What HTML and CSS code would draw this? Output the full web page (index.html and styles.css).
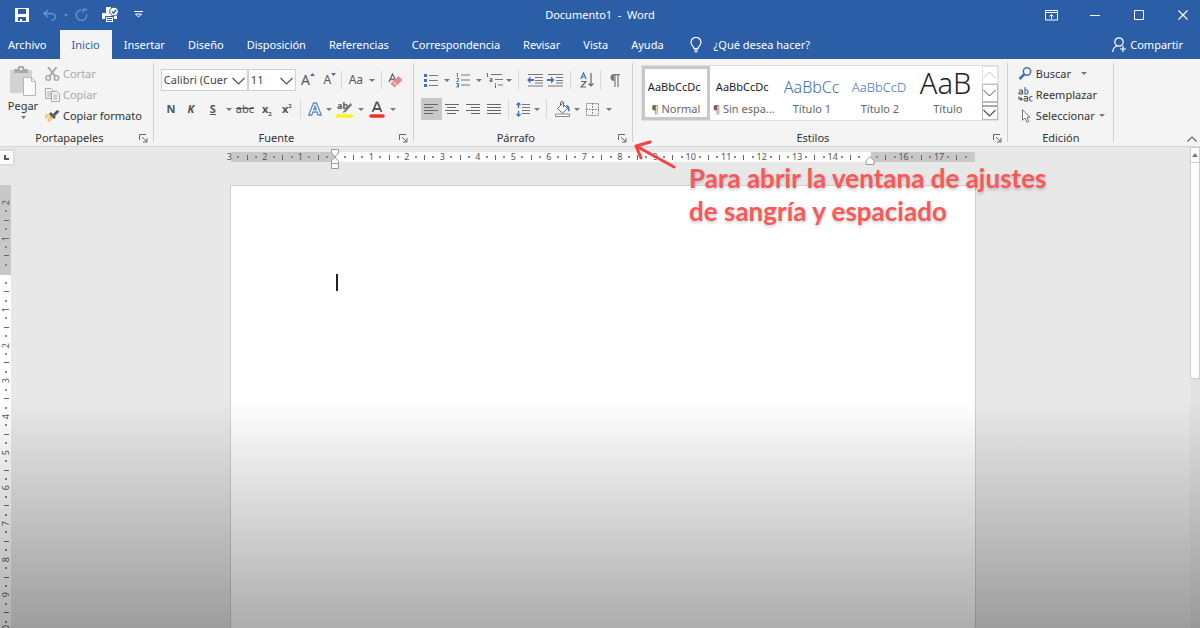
FILE: index.html
```html
<!DOCTYPE html>
<html lang="es">
<head>
<meta charset="utf-8">
<title>Documento1 - Word</title>
<link rel="stylesheet" href="styles.css">
</head>
<body>
<div class="app">
  <header class="titlebar">
    <div class="quick">
      <button class="qbtn w28" aria-label="Guardar"><svg width="14" height="14" viewBox="0 0 14 14"><path fill="#fff" fill-rule="evenodd" d="M0 0h14v14H0zM3 1v5h8V1zM3 9v4h2v-2h2v2h4V9z"/></svg></button>
      <button class="qbtn w28 dim" aria-label="Deshacer"><svg width="14" height="12" viewBox="0 0 14 12" fill="none" stroke="currentColor" stroke-width="1.4"><path d="M5 1L1 4.500 5 8M1.500 4.500H8c3 0 4.500 1.500 4.500 3.200S11 11 8.500 11"/></svg></button>
      <button class="qbtn w4 dim" aria-label="Opciones de deshacer"><svg width="4" height="3" viewBox="0 0 4 3"><path fill="currentColor" d="M0 0h4L2 3z"/></svg></button>
      <button class="qbtn w28 dim" aria-label="Repetir"><svg width="14" height="14" viewBox="0 0 14 14" fill="none" stroke="currentColor" stroke-width="1.300"><path d="M6 2A5.200 5.200 0 1 0 11.500 6M8 5V1.500h4"/></svg></button>
      <button class="qbtn w28" aria-label="Vista previa de impresión"><svg width="17" height="16" viewBox="0 0 17 16"><path fill="#fff" d="M4 0h5v6H4zM0 6h15v6H0z"/><path fill="#fff" stroke="#2b5ea7" d="M3.500 9.500h8v6h-8z"/><circle cx="12" cy="4.500" r="4.300" fill="#fff" stroke="#2b5ea7"/><path d="M10 4.500l1.500 1.600 2.700-3.300" fill="none" stroke="#2b5ea7" stroke-width="1.400"/><path fill="#2b5ea7" d="M5 11h5v1H5zM5 13h5v1H5z"/></svg></button>
      <button class="qbtn w28" aria-label="Personalizar barra"><svg width="9" height="8" viewBox="0 0 9 8" fill="none" stroke="#fff"><path d="M0 .5h9M1.500 3h6L4.500 6z"/></svg></button>
    </div>
    <h1 class="doc-title">Documento1&nbsp; -&nbsp; Word</h1>
    <div class="window-controls">
      <button class="wbtn" aria-label="Opciones de la cinta"><svg width="13" height="11" viewBox="0 0 13 11" fill="none" stroke="#fff"><path d="M.5.5h12v9.500H.5zM.5 2.500h12M6.500 9V4.500M4.500 6.500l2-2 2 2"/></svg></button>
      <button class="wbtn" aria-label="Minimizar"><svg width="10" height="10" viewBox="0 0 10 10"><path d="M0 5.500h10" stroke="#fff"/></svg></button>
      <button class="wbtn" aria-label="Maximizar"><svg width="10" height="10" viewBox="0 0 10 10"><path d="M.5.5h9v9h-9z" stroke="#fff" fill="none"/></svg></button>
      <button class="wbtn" aria-label="Cerrar"><svg width="10" height="10" viewBox="0 0 10 10"><path d="M.5.5l9 9M9.500.5l-9 9" stroke="#fff" stroke-width="1.200"/></svg></button>
    </div>
  </header>

  <nav class="tabs">
    <button class="tab tab-file">Archivo</button>
    <button class="tab active">Inicio</button>
    <button class="tab">Insertar</button>
    <button class="tab">Diseño</button>
    <button class="tab">Disposición</button>
    <button class="tab">Referencias</button>
    <button class="tab">Correspondencia</button>
    <button class="tab">Revisar</button>
    <button class="tab">Vista</button>
    <button class="tab">Ayuda</button>
    <button class="tell-me"><svg width="12" height="16" viewBox="0 0 12 16" fill="none" stroke="#fff" stroke-width="1.200"><path d="M4 11.500c0-2-3-3-3-6.200a5 5 0 0 1 10 0c0 3.200-3 4.200-3 6.200zM4 13.200h4M4.500 15h3"/></svg>¿Qué desea hacer?</button>
    <button class="share"><svg width="14" height="16" viewBox="0 0 14 16" fill="none" stroke="#fff" stroke-width="1.200"><circle cx="7" cy="5" r="4.200"/><path d="M.7 15c.2-3.300 1.800-5.200 4.300-6M8 12h6M11 9v6"/></svg>Compartir</button>
  </nav>

  <div class="ribbon">
    <section class="group" aria-label="Portapapeles">
      <div class="group-body clipboard">
        <button class="paste">
          <svg width="26" height="30" viewBox="0 0 26 30"><path fill="#d2d2d2" d="M0 4h22v23H0z"/><path fill="#a9a9a9" d="M4 3h3.500a3.500 3.500 0 0 1 7 0H18v4H4z"/><circle cx="11" cy="3" r="1.300" fill="#f4f4f4"/><path fill="#fafafc" stroke="#b5b5bd" d="M13.500 11.500h8l4 4v14h-12zM21.500 11.500v4h4"/></svg>
          <span>Pegar</span>
          <svg class="caret" width="5" height="3" viewBox="0 0 5 3"><path d="M0 0h5L2.500 3z"/></svg>
        </button>
        <div class="stack">
          <button class="line off"><svg width="15" height="14" viewBox="0 0 15 14" fill="none" stroke="#a8a8a8" stroke-width="1.500"><path d="M3 0l7.500 9.500M11.500 0L4.500 9.500" stroke-width="2"/><circle cx="3.200" cy="11" r="2.200"/><circle cx="11.500" cy="11" r="2.200"/></svg>Cortar</button>
          <button class="line off"><svg width="15" height="14" viewBox="0 0 15 14" fill="#f8f8f8" stroke="#a8a8a8"><path d="M.5.5H6L8.500 3v7.500h-8zM2 4h4M2 6h4M2 8h4"/><path d="M6.500 3.500H12L14.500 6v7.500h-8zM8.500 7h4M8.500 9h4M8.500 11h4"/></svg>Copiar</button>
          <button class="line"><svg width="15" height="14" viewBox="0 0 15 14"><path fill="#f0bd62" d="M0 6l4-1 4 4-3 4-2-1-1-2-2-1z"/><path d="M1 7l5 4M4 6l-2 5" stroke="#fff0c8"/><path d="M5 4l5 5" stroke="#555" stroke-width="2.500"/><path fill="#555" d="M8 5l4-4 2.500 1.500L10 7z"/></svg>Copiar formato</button>
        </div>
      </div>
      <footer class="group-foot"><span>Portapapeles</span><button class="launcher" aria-label="Más opciones de portapapeles"><svg width="9" height="9" viewBox="0 0 9 9"><path d="M.5 6V.5H7M3 3l4.500 4.500M8 4v4H4" fill="none" stroke="#666"/></svg></button></footer>
    </section>

    <section class="group" aria-label="Fuente">
      <div class="group-body rows rows-font">
        <div class="row">
          <label class="combo combo-font"><select aria-label="Fuente"><option>Calibri (Cuerpo)</option></select><svg width="13" height="8" viewBox="0 0 13 8"><path d="M.5 1l6 6 6-6" fill="none" stroke="#555" stroke-width="1.200"/></svg></label>
          <label class="combo combo-size"><select aria-label="Tamaño"><option>11</option></select><svg width="13" height="8" viewBox="0 0 13 8"><path d="M.5 1l6 6 6-6" fill="none" stroke="#555" stroke-width="1.200"/></svg></label>
          <button class="tool w24" aria-label="Aumentar tamaño"><span class="glyph-l">A</span><svg class="sup" width="5" height="3" viewBox="0 0 5 3"><path fill="#4472b8" d="M0 3h5L2.500 0z"/></svg></button>
          <button class="tool w20" aria-label="Disminuir tamaño"><span class="glyph-s">A</span><svg class="sup" width="5" height="3" viewBox="0 0 5 3"><path fill="#4472b8" d="M0 0h5L2.500 3z"/></svg></button>
          <i class="sep w4"></i>
          <button class="tool w24 glyph-m" aria-label="Cambiar mayúsculas">Aa</button>
          <button class="drop w8" aria-label="Opciones"></button>
          <i class="sep w12"></i>
          <button class="tool w16" aria-label="Borrar formato"><svg width="15" height="15" viewBox="0 0 15 15"><path d="M1 9L4.500 1 8 8M2.200 6.500h4" stroke="#666" stroke-width="1.300" fill="none"/><path d="M2.500 10.500l8-7.500 4 4-8 7.500z" fill="#e38a8a"/><path d="M5 8.500l4 4" stroke="#fff"/></svg></button>
        </div>
        <div class="row">
          <button class="tool w20 bold">N</button>
          <button class="tool w20 bold italic">K</button>
          <button class="tool w24 bold under">S</button>
          <button class="drop w8" aria-label="Opciones de subrayado"></button>
          <button class="tool w24 strike">abc</button>
          <button class="tool w20 bold" aria-label="Subíndice"><span>x<sub>2</sub></span></button>
          <button class="tool w20 bold" aria-label="Superíndice"><span>x<sup>2</sup></span></button>
          <i class="sep w8"></i>
          <button class="tool w20" aria-label="Efectos de texto"><svg width="14" height="14" viewBox="0 0 14 14"><path d="M.8 13L5.500 1h3L13.200 13h-3L9 10H5l-1.200 3zM7 4L5.800 7.500h2.400z" fill="#fff" stroke="#5b8bc9" stroke-width="1.300"/></svg></button>
          <button class="drop w8" aria-label="Opciones de efectos"></button>
          <button class="tool w24" aria-label="Color de resaltado"><svg width="17" height="17" viewBox="0 0 17 17"><text x="1" y="8" font-family="Noto Sans" font-size="9" font-weight="700" fill="#555">ab</text><path d="M14.500 2L8 9.500 6.500 12l3-1L16 4z" fill="#777"/><path d="M1.500 15h14" stroke="#fdf01f" stroke-width="3.500" stroke-linecap="round"/></svg></button>
          <button class="drop w8" aria-label="Opciones de resaltado"></button>
          <button class="tool w24" aria-label="Color de fuente"><svg width="16" height="17" viewBox="0 0 16 17"><path d="M3.500 11L7.500 1.500h1L12.500 11M5 8h6" fill="none" stroke="#555" stroke-width="1.800"/><path d="M2 15h12" stroke="#f0322d" stroke-width="3.500" stroke-linecap="round"/></svg></button>
          <button class="drop w8" aria-label="Opciones de color"></button>
        </div>
      </div>
      <footer class="group-foot"><span>Fuente</span><button class="launcher" aria-label="Más opciones de fuente"><svg width="9" height="9" viewBox="0 0 9 9"><path d="M.5 6V.5H7M3 3l4.500 4.500M8 4v4H4" fill="none" stroke="#666"/></svg></button></footer>
    </section>

    <section class="group" aria-label="Párrafo">
      <div class="group-body rows">
        <div class="row">
          <button class="tool w20" aria-label="Viñetas"><svg width="14" height="15" viewBox="0 0 14 15"><path d="M5 2.500h9M5 7.500h9M5 12.500h9" stroke="#777" stroke-width="1.200"/><path fill="#4472b8" d="M0 1h3v3H0zM0 6h3v3H0zM0 11h3v3H0z"/></svg></button>
          <button class="drop w12" aria-label="Opciones de viñetas"></button>
          <button class="tool w20" aria-label="Numeración"><svg width="14" height="16" viewBox="0 0 14 16"><path d="M5 3h9M5 8h9M5 13h9" stroke="#777" stroke-width="1.200"/><path fill="none" stroke="#4472b8" d="M.5 1.500h1V5M.5 6.500h2v1.300L.7 9.500h2M.3 11.500h2.200v3.500H.3M.8 13.200h1.700"/></svg></button>
          <button class="drop w12" aria-label="Opciones de numeración"></button>
          <button class="tool w20" aria-label="Lista multinivel"><svg width="17" height="16" viewBox="0 0 17 16"><path d="M5 2.500h11M9 7.500h8M12 13h5" stroke="#777" stroke-width="1.200"/><path fill="none" stroke="#4472b8" d="M.5 1.500h1V5M4 6.500h2v3H4v-1.500h2M9.500 11v1M9.500 12.500V16"/></svg></button>
          <button class="drop w8" aria-label="Opciones de multinivel"></button>
          <i class="sep w12"></i>
          <button class="tool w20" aria-label="Disminuir sangría"><svg width="16" height="14" viewBox="0 0 16 14"><path d="M1 1.500h15M8 4.500h8M8 7.500h8M8 10h8M1 13h15" stroke="#777"/><path d="M0 7l3.500-3.500V6H7v2H3.500v2.500z" fill="#4472b8"/></svg></button>
          <button class="tool w20" aria-label="Aumentar sangría"><svg width="16" height="14" viewBox="0 0 16 14"><path d="M1 1.500h15M9 4.500h7M9 7.500h7M9 10h7M1 13h15" stroke="#777"/><path d="M7.500 7L4 3.500V6H0v2h4v2.500z" fill="#4472b8"/></svg></button>
          <i class="sep w12"></i>
          <button class="tool w20" aria-label="Ordenar"><svg width="14" height="16" viewBox="0 0 14 16" fill="none" stroke-width="1.200"><path d="M.8 7L3.500 1l2.700 6M1.700 5h3.600" stroke="#4472b8"/><path d="M1 9.500h5L1 15h5M11 1v13M8.500 11.500L11 14l2.500-2.500" stroke="#666"/></svg></button>
          <i class="sep w8"></i>
          <button class="tool w20" aria-label="Mostrar todo"><svg width="10" height="13" viewBox="0 0 10 13"><path d="M4 0a3.500 3.500 0 0 0 0 7z" fill="#777"/><path d="M4 .6h6M5 0v13M8 0v13" stroke="#777" stroke-width="1.200"/></svg></button>
        </div>
        <div class="row">
          <button class="tool w21 on" aria-label="Alinear a la izquierda"><svg width="14" height="11" viewBox="0 0 14 11"><path d="M0 .5h14M0 3.500h9M0 6.500h14M0 9.500h9" stroke="#666"/></svg></button>
          <button class="tool w21" aria-label="Centrar"><svg width="14" height="11" viewBox="0 0 14 11"><path d="M0 .5h14M2 3.500h9M0 6.500h14M2 9.500h9" stroke="#666"/></svg></button>
          <button class="tool w21" aria-label="Alinear a la derecha"><svg width="14" height="11" viewBox="0 0 14 11"><path d="M0 .5h14M5 3.500h9M0 6.500h14M5 9.500h9" stroke="#666"/></svg></button>
          <button class="tool w21" aria-label="Justificar"><svg width="14" height="11" viewBox="0 0 14 11"><path d="M0 .5h14M0 3.500h14M0 6.500h14M0 9.500h14" stroke="#666"/></svg></button>
          <i class="sep w8"></i>
          <button class="tool w20" aria-label="Espaciado"><svg width="14" height="15" viewBox="0 0 14 15"><path d="M6 2.500h8M6 5.500h8M6 8.500h8M6 11.500h8" stroke="#777"/><path d="M2.500 1v5M2.500 9v5M.5 3l2-2 2 2M.5 12l2 2 2-2" stroke="#4472b8" stroke-width="1.400" fill="none"/></svg></button>
          <button class="drop w8" aria-label="Opciones de espaciado"></button>
          <i class="sep w12"></i>
          <button class="tool w20" aria-label="Sombreado"><svg width="16" height="16" viewBox="0 0 16 16"><path d="M2.500 7.500l5-5 5 5-5 4.500zM5.500 4.500V2a1.500 1.500 0 0 1 3 0v4" fill="#fff" stroke="#666"/><path d="M11 4c3 0 4 2 3.500 7-2-1-1.500-3-2-4z" fill="#4472b8"/><path d="M.5 13h14v2.500H.5z" fill="#fff" stroke="#888"/></svg></button>
          <button class="drop w8" aria-label="Opciones de sombreado"></button>
          <button class="tool w24" aria-label="Bordes"><svg width="13" height="13" viewBox="0 0 13 13"><path d="M.5.5h12v12H.5zM6.500 0v13M0 6.500h13" fill="none" stroke="#8a8a8a" stroke-dasharray="2 1"/></svg></button>
          <button class="drop w8" aria-label="Opciones de bordes"></button>
        </div>
      </div>
      <footer class="group-foot"><span>Párrafo</span><button class="launcher" aria-label="Configuración de párrafo"><svg width="9" height="9" viewBox="0 0 9 9"><path d="M.5 6V.5H7M3 3l4.500 4.500M8 4v4H4" fill="none" stroke="#666"/></svg></button></footer>
    </section>

    <section class="group" aria-label="Estilos">
      <div class="group-body styles-body">
        <div class="gallery">
          <button class="style selected"><span class="sample">AaBbCcDc</span><span class="name">¶ Normal</span></button>
          <button class="style"><span class="sample">AaBbCcDc</span><span class="name">¶ Sin espa...</span></button>
          <button class="style"><span class="sample s-h1">AaBbCc</span><span class="name">Título 1</span></button>
          <button class="style"><span class="sample s-h2">AaBbCcD</span><span class="name">Título 2</span></button>
          <button class="style"><span class="sample s-title">AaB</span><span class="name">Título</span></button>
          <div class="gallery-scroll">
            <button class="faint" aria-label="Fila anterior"><svg width="13" height="8" viewBox="0 0 13 8"><path d="M.5 7l6-6 6 6" fill="none" stroke="#c4c4c4"/></svg></button>
            <button aria-label="Fila siguiente"><svg width="13" height="8" viewBox="0 0 13 8"><path d="M.5 1l6 6 6-6" fill="none" stroke="#555"/></svg></button>
            <button aria-label="Más estilos"><svg width="15" height="14" viewBox="0 0 15 14"><path d="M0 2h15M1.500 6l6 6 6-6" fill="none" stroke="#555" stroke-width="1.200"/></svg></button>
          </div>
        </div>
      </div>
      <footer class="group-foot"><span>Estilos</span><button class="launcher" aria-label="Más opciones de estilos"><svg width="9" height="9" viewBox="0 0 9 9"><path d="M.5 6V.5H7M3 3l4.500 4.500M8 4v4H4" fill="none" stroke="#666"/></svg></button></footer>
    </section>

    <section class="group" aria-label="Edición">
      <div class="group-body editing">
        <div class="stack">
          <button class="line"><svg width="15" height="14" viewBox="0 0 15 14" fill="none" stroke="#4472b8"><circle cx="9" cy="4.500" r="3.700" stroke-width="1.500"/><path d="M6 7.500L1.500 12" stroke-width="2.500"/></svg>Buscar<i class="drop w20"></i></button>
          <button class="line"><svg width="15" height="16" viewBox="0 0 15 16" fill="none" stroke="#555" stroke-width="1.200"><path d="M1 3h2.500q1 0 1 1v3H2q-1 0-1-1t1-1h2.500M6 9.500h2.500q1 0 1 1v3.500H7q-1 0-1-1.200t1-1.300h2.500M1 9.500V12h3M2.500 10.500L4 12l-1.500 1.500"/><path d="M7 0v7h1.500q1.500 0 1.500-2T8.500 3H7M14.500 9.500H13q-1.500 0-1.500 2.200T13 14h1.500" stroke="#3e6fb8"/></svg>Reemplazar</button>
          <button class="line"><svg width="15" height="14" viewBox="0 0 15 14"><path d="M4.500.8v10.500L7 9l2 4.300 1.800-.8L9 8.300h3z" fill="#fff" stroke="#777"/></svg>Seleccionar<i class="drop w8"></i></button>
        </div>
      </div>
      <footer class="group-foot"><span>Edición</span></footer>
    </section>
    <button class="collapse" aria-label="Contraer la cinta"><svg width="10" height="6" viewBox="0 0 10 6"><path d="M.5 5.500L5 1l4.500 4.500" fill="none" stroke="#666" stroke-width="1.200"/></svg></button>
  </div>

  <main class="workspace">
    <button class="tab-stop" aria-label="Tabulación"><svg width="5" height="5" viewBox="0 0 5 5"><path d="M1 0v4h4" fill="none" stroke="#555" stroke-width="2"/></svg></button>
    <div class="ruler-row">
      <div class="ruler-h">
        <div class="marks" id="marks-h"></div>
        <svg class="indent-left" width="10" height="21" viewBox="0 0 10 21" fill="#fff" stroke="#999"><path d="M1.500.5h7V4L5 8 1.500 4zM5 8l3.500 4v2.500h-7V12zM1.500 14.500h7v5h-7z"/></svg>
        <svg class="indent-right" width="10" height="9" viewBox="0 0 10 9"><path d="M5 .8L9 4.500v4H1v-4z" fill="#fff" stroke="#999"/></svg>
      </div>
    </div>
    <div class="ruler-v"><div class="marks" id="marks-v"></div></div>
    <div class="canvas">
      <article class="page" role="textbox" aria-label="Documento"><span class="cursor"></span></article>
    </div>
    <div class="scrollbar">
      <button class="scroll-up" aria-label="Subir"><svg width="6" height="4" viewBox="0 0 6 4"><path d="M0 4h6L3 0z" fill="#777"/></svg></button>
      <div class="thumb"></div>
    </div>
    <div class="shade"></div>
  </main>

  <aside class="note">
    <svg width="44" height="32" viewBox="0 0 44 32" fill="none" stroke="#fb4040" stroke-width="3" stroke-linecap="round" stroke-linejoin="round"><path d="M41 29L3 8M17 4L3 8l5 12"/></svg>
    <p>Para abrir la ventana de ajustes<br>de sangría y espaciado</p>
  </aside>
</div>
<script src="ruler.js"></script>
</body>
</html>
```
FILE: styles.css
```css
* { box-sizing: border-box; }
body { margin: 0; font: 11px/16px "Noto Sans", "Open Sans", sans-serif; color: #333; }
button { margin: 0; padding: 0; border: 0; background: none; font: inherit; color: inherit; }
svg { display: block; flex: none; }

.app { position: relative; display: flex; flex-direction: column; height: 100vh; overflow: hidden; }

.w4 { width: 4px; } .w8 { width: 8px; } .w12 { width: 12px; } .w16 { width: 16px; }
.w20 { width: 20px; } .w21 { width: 21px; } .w24 { width: 24px; } .w28 { width: 28px; }

/* Title bar */
.titlebar { display: grid; grid-template-columns: 1fr auto 1fr; align-items: center; height: 30px; background: #2b5ea7; color: #fff; }
.quick { display: flex; padding-left: 8px; }
.qbtn { display: flex; align-items: center; justify-content: center; height: 30px; }
.dim { color: #6f94c8; }
.doc-title { margin: 0; font-size: 11px; font-weight: 400; }
.window-controls { display: flex; justify-content: flex-end; gap: 10px; }
.wbtn { display: flex; align-items: center; justify-content: center; width: 34px; height: 26px; }

/* Tabs */
.tabs { display: flex; gap: 1px; height: 29px; background: #2b5ea7; color: #fff; }
.tab { padding: 0 11px; }
.tab-file { padding: 0 12px 0 8px; }
.tab.active { padding: 0 12px; background: #f4f4f4; color: #2b5ea7; }
.tell-me, .share { display: flex; align-items: center; gap: 12px; padding-left: 14px; }
.share { gap: 4px; margin-left: auto; padding-right: 17px; }

/* Ribbon */
.ribbon { display: flex; height: 88px; background: #f4f4f4; border-bottom: 1px solid #d5d5d5; }
.group { position: relative; display: flex; flex-direction: column; padding: 4px 0 0; }
.group::after { content: ""; position: absolute; top: 4px; right: 0; bottom: 4px; width: 1px; background: #cfcfcf; }
.group-body { flex: 1; }
.group-foot { display: flex; align-items: center; height: 16px; }
.group-foot span { flex: 1; text-align: center; }
.launcher { width: 14px; margin-right: 1px; }
.rows { display: flex; flex-direction: column; gap: 7px; padding: 6px 8px 0 7px; }
.rows-font { padding-right: 10px; }
.row { display: flex; align-items: center; height: 22px; }
.tool { display: flex; align-items: center; justify-content: center; height: 22px; color: #555; }
.tool.on { background: #c8c8c8; }
.drop { display: flex; align-items: center; justify-content: center; height: 22px; }
.drop::before { content: ""; border: 3px solid transparent; border-top-color: #777; border-bottom: 0; }
.sep { display: flex; justify-content: center; height: 20px; }
.sep::before { content: ""; width: 1px; background: #dadada; }
.caret { fill: #777; }

.clipboard { display: flex; gap: 6px; padding: 3px 12px 0 7px; }
.paste { display: flex; flex-direction: column; align-items: center; gap: 2px; width: 32px; color: #333; }
.stack { display: flex; flex-direction: column; margin-top: -3px; }
.line { display: flex; align-items: center; gap: 3px; height: 21px; color: #333; }
.line.off { color: #a8a8a8; }
.editing { padding: 3px 8px 0 10px; }

.combo { position: relative; display: block; height: 22px; border: 1px solid #d0d0d0; background: #fff; }
.combo select { width: 100%; height: 20px; padding: 0 19px 0 2px; border: 0; background: none; font: inherit; color: #444; appearance: none; }
.combo svg { position: absolute; top: 7px; right: 2px; pointer-events: none; }
.combo-font { width: 87px; }
.combo-size { width: 48px; }
.glyph-l { font-size: 14px; } .glyph-s { font-size: 12px; } .glyph-m { font-size: 12px; }
.sup { align-self: flex-start; margin-top: 4px; }
.bold { font-weight: 700; }
.italic { font-style: italic; }
.under { text-decoration: underline; }
.strike { text-decoration: line-through; }
sub, sup { font-size: 6px; line-height: 0; }

.styles-body { padding: 2px 9px 0 8px; }
.gallery { display: flex; height: 56px; border: 1px solid #e0e0e0; background: #fff; }
.style { display: flex; flex-direction: column; justify-content: flex-end; width: 68px; padding: 0 6px 3px; color: #222; }
.style.selected { padding: 0 3px; border: 3px solid #c8c8c8; }
.sample { display: block; height: 28px; line-height: 28px; white-space: nowrap; text-align: left; }
.name { display: block; margin: 0 -4px; color: #666; white-space: nowrap; }
.s-h1 { font-size: 16px; font-weight: 300; color: #3e6fb8; }
.s-h2 { font-size: 13px; font-weight: 300; color: #3e6fb8; }
.s-title { height: 32px; font-size: 29px; font-weight: 300; }
.gallery-scroll { display: flex; flex-direction: column; width: 16px; }
.gallery-scroll button { display: flex; flex: 1; align-items: center; justify-content: center; border: 1px solid #bbb; }
.gallery-scroll .faint { border-color: #e4e4e4; }
.collapse { align-self: flex-end; margin: 0 3px 4px auto; }

/* Work area */
.workspace { position: relative; flex: 1; min-height: 0; display: grid; grid-template-columns: 11px 1fr 10px; grid-template-rows: 38px minmax(0, 1fr); background: #e8e8e8; }
.tab-stop { grid-area: 1 / 1; display: flex; align-items: center; justify-content: center; width: 15px; height: 17px; margin-top: 2px; border: 2px solid #dcdcdc; border-left: 0; background: #fff; }
.ruler-row, .canvas { display: flex; justify-content: center; padding-left: 5px; }
.ruler-row { grid-area: 1 / 2; }
.ruler-h { position: relative; width: 100%; max-width: 744px; height: 10px; margin-top: 5px; background: linear-gradient(90deg, #c8c8c8 14%, #fff 14% 86%, #c8c8c8 86%); }
.marks { display: grid; color: #555; font-size: 9px; line-height: 10px; }
.ruler-h .marks { grid-auto-flow: column; grid-auto-columns: minmax(0, 1fr); margin: 0 -4px 0 -6px; }
.mark { display: flex; align-items: center; justify-content: center; height: 10px; min-width: 0; }
.mark.dot::before { content: ""; width: 2px; height: 2px; background: #888; }
.mark.tick::before { content: ""; width: 1px; height: 5px; background: #666; }
.indent-left { position: absolute; left: 14%; top: -3px; margin-left: -5px; }
.indent-right { position: absolute; left: 86%; top: 4px; margin-left: -6px; }
.ruler-v { grid-area: 2 / 1; overflow: hidden; background: linear-gradient(#c8c8c8 90px, #fff 90px); }
.ruler-v .marks { height: calc(100% + 7px); padding-top: 13px; grid-auto-rows: minmax(0, 1fr); }
.ruler-v .mark { width: 12px; height: auto; min-height: 0; }
.ruler-v .mark.tick::before { width: 5px; height: 1px; }
.ruler-v .mark span { writing-mode: vertical-rl; transform: rotate(180deg); }
.canvas { grid-area: 2 / 2; }
.page { width: 100%; max-width: 746px; padding: 88px 105px 0; border: 1px solid #cfcfcf; border-bottom: 0; background: #fff; }
.cursor { display: block; width: 2px; height: 17px; background: #222; }
.scrollbar { grid-area: 1 / 3 / 3 / 4; display: flex; flex-direction: column; background: #e2e2e2; }
.scroll-up { display: flex; align-items: center; justify-content: center; height: 16px; border: 1px solid #ccc; background: #fff; }
.thumb { height: 216px; border: 1px solid #ccc; border-top: 0; background: #fff; }
.shade { position: absolute; inset: 253px 0 0; background: linear-gradient(transparent, rgba(0, 0, 0, .32)); pointer-events: none; }

/* Callout */
.note { position: absolute; left: 633px; top: 138px; display: flex; gap: 12px; }
.note p { margin: 24px 0 0; font: 700 26px/33px Lato, sans-serif; color: #ff5757; text-shadow: 0 2px 3px rgba(0, 0, 0, .2); }
```
FILE: ruler.js
```js
// Four marks per centimetre: number, dot, half-centimetre tick, dot.
function fillRuler(id, zeroAt, count, hidden) {
  const box = document.getElementById(id);
  for (let i = 0; i < count; i++) {
    const mark = document.createElement("div");
    const quarter = i % 4;
    mark.className = "mark";
    if (quarter === 0) {
      const cm = Math.abs(i / 4 - zeroAt);
      const label = document.createElement("span");
      label.textContent = hidden.includes(i / 4) ? "" : cm;
      mark.append(label);
    } else {
      mark.classList.add(quarter === 2 ? "tick" : "dot");
    }
    box.append(mark);
  }
}
fillRuler("marks-h", 3, 85, [3, 18, 21]);
fillRuler("marks-v", 2, 49, [2]);
```
